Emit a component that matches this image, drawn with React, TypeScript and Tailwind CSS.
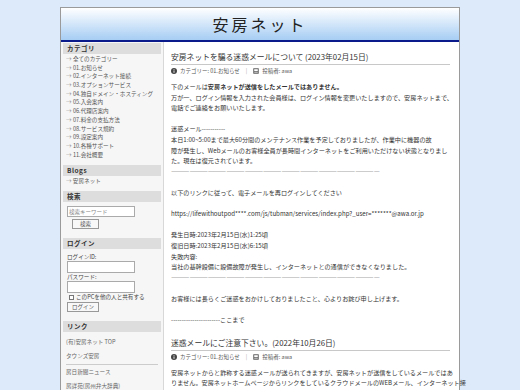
import React from "react";

const F = "font-['Noto_Sans_CJK_JP','Noto_Sans',sans-serif]";

function SideHead({ children }: { children: React.ReactNode }) {
  return (
    <div className="h-[11px] bg-[#dddddd] px-[4px] text-[6.5px] font-bold leading-[11px] text-[#333] tracking-[0.5px]">
      {children}
    </div>
  );
}

const cats = [
  "全てのカテゴリー",
  "01.お知らせ",
  "02.インターネット接続",
  "03.オプションサービス",
  "04.独自ドメイン・ホスティング",
  "05.入会案内",
  "06.代理店案内",
  "07.料金の支払方法",
  "08.サービス規約",
  "09.設定案内",
  "10.各種サポート",
  "11.会社概要",
];

function Meta() {
  return (
    <div className="flex items-center gap-[3px] text-[5.5px] leading-[8px] text-[#555]">
      <svg width="6" height="6" viewBox="0 0 10 10">
        <circle cx="5" cy="5" r="5" fill="#444" />
        <rect x="4.3" y="4" width="1.4" height="4" fill="#fff" />
        <rect x="4.3" y="2" width="1.4" height="1.3" fill="#fff" />
      </svg>
      <span>カテゴリー: 01.お知らせ</span>
      <span className="mx-[3px] text-[#aaa]">|</span>
      <svg width="6" height="6" viewBox="0 0 10 10">
        <rect x="0.5" y="0.5" width="9" height="9" fill="#555" />
        <rect x="2" y="2" width="6" height="3" fill="#fff" />
        <rect x="2" y="6" width="6" height="2" fill="#ccc" />
      </svg>
      <span>投稿者: awa</span>
    </div>
  );
}

function L({ children }: { children?: React.ReactNode }) {
  return <div className="h-[10.6px] leading-[10.6px] whitespace-nowrap">{children}</div>;
}

const DASH = "――――――――――――――――――――――――――――――――――";

export default function App() {
  return (
    <div className={`${F} h-[390px] bg-[#dceaf9] pt-[7px] overflow-hidden`}>
      <div className="mx-auto w-[400px] border border-[#9a9a9a] bg-white">
        <div className="flex h-[34px] items-center justify-center border-b-2 border-[#0b1a8a] bg-gradient-to-b from-white to-[#a6cdf3]">
          <span className="text-[16px] tracking-[3px] text-[#222] leading-none">安房ネット</span>
        </div>
        <div className="flex">
          <div className="w-[103px] shrink-0 border-r border-[#d8d8d8] bg-[#f6f6f6] px-[2px] pt-[1px] text-[5.6px] text-[#555]">
            <SideHead>カテゴリ</SideHead>
            <div className="pt-[1px] pb-[6px] pl-[3px]">
              {cats.map((c) => (
                <div key={c} className="h-[8.7px] leading-[8.7px] whitespace-nowrap">
                  <span className="text-[#888]">→</span> {c}
                </div>
              ))}
            </div>
            <SideHead>Blogs</SideHead>
            <div className="pl-[3px] pt-[1px] pb-[5px] leading-[9px]">
              <span className="text-[#888]">→</span> 安房ネット
            </div>
            <SideHead>検索</SideHead>
            <div className="px-[4px] pt-[4px] pb-[9px]">
              <div className="h-[11px] w-[68px] border border-[#aaa] bg-white pl-[1px] text-[5.5px] leading-[10px] text-[#888]">
                検索キーワード
              </div>
              <div className="mt-[2px] ml-[5px] flex h-[10px] w-[27px] items-center justify-center border border-[#999] bg-[#f8f8f8] text-[5.5px]">
                検索
              </div>
            </div>
            <SideHead>ログイン</SideHead>
            <div className="px-[4px] pt-[4px] pb-[9px]">
              <div className="leading-[8px] text-[#444]">ログインID:</div>
              <div className="h-[12px] w-[68px] border border-[#aaa] bg-white" />
              <div className="leading-[8px] text-[#444]">パスワード:</div>
              <div className="h-[12px] w-[68px] border border-[#aaa] bg-white" />
              <div className="flex items-center gap-[2px] pl-[2px] text-[#444] leading-[8px] whitespace-nowrap">
                <span className="inline-block h-[5px] w-[5px] border border-[#777] bg-white" />
                このPCを他の人と共有する
              </div>
              <div className="mt-[1px] flex h-[10px] w-[32px] items-center justify-center border border-[#999] bg-[#f8f8f8] text-[5.5px]">
                ログイン
              </div>
            </div>
            <SideHead>リンク</SideHead>
            <div className="px-[3px] pt-[3px] text-[#666]">
              <div className="h-[14px] leading-[14px]">(有)安房ネット TOP</div>
              <div className="h-[14px] leading-[14px]">タウンズ安房</div>
              <div className="mt-[1px] h-[1px] bg-[#cccccc]" />
              <div className="h-[14px] leading-[14px]">房日新聞ニュース</div>
              <div className="h-[14px] leading-[14px]">房詳苑(房州弁大辞典)</div>
            </div>
          </div>
          <div className="min-w-0 flex-1 pl-[7px] pr-[9px] pt-[9px] text-[6.15px] text-[#333]">
            <div className="border-b border-[#c8c8c8] pb-[1px] text-[7.8px] leading-[12px] text-[#333] whitespace-nowrap">
              安房ネットを騙る迷惑メールについて (2023年02月15日)
            </div>
            <div className="mt-[2px]">
              <Meta />
            </div>
            <div className="mt-[7px]">
              <L>
                下のメールは<b>安房ネットが送信をしたメールではありません。</b>
              </L>
              <L>万が一、ログイン情報を入力された会員様は、ログイン情報を変更いたしますので、安房ネットまで、</L>
              <L>電話でご連絡をお願いいたします。</L>
              <L />
              <L>迷惑メール-----------</L>
              <L>本日1:00~5:00まで最大60分間のメンテナンス作業を予定しておりましたが、作業中に機器の故</L>
              <L>障が発生し、Webメールのお客様全員が長時間インターネットをご利用いただけない状態となりまし</L>
              <L>た。現在は復元されています。</L>
              <L>{DASH}</L>
              <L />
              <L>以下のリンクに従って、電子メールを再ログインしてください</L>
              <L />
              <L>https://lifewithoutpod****.com/js/tubman/services/index.php?_user=*******@awa.or.jp</L>
              <L />
              <L>発生日時:2023年2月15日(水)1:25頃</L>
              <L>復旧日時:2023年2月15日(水)6:15頃</L>
              <L>失敗内容:</L>
              <L>当社の基幹設備に設備故障が発生し、インターネットとの通信ができなくなりました。</L>
              <L>{DASH}</L>
              <L />
              <L>お客様には長らくご迷惑をおかけしておりましたこと、心よりお詫び申し上げます。</L>
              <L />
              <L>-----------------------ここまで</L>
            </div>
            <div className="mt-[11px] border-b border-[#c8c8c8] pb-[1px] text-[7.8px] leading-[12px] whitespace-nowrap">
              迷惑メールにご注意下さい。(2022年10月26日)
            </div>
            <div className="mt-[2px]">
              <Meta />
            </div>
            <div className="mt-[7px]">
              <L>安房ネットからと詐称する迷惑メールが送られてきますが、安房ネットが送信をしているメールではあ</L>
              <L>りません。安房ネットホームページからリンクをしているクラウドメールのWEBメール、インターネット接</L>
              <L>続設定以外でホームページに「アカウント」や「パスワード」をご入力いただく事は有りません。ホームペー</L>
            </div>
          </div>
        </div>
      </div>
    </div>
  );
}
